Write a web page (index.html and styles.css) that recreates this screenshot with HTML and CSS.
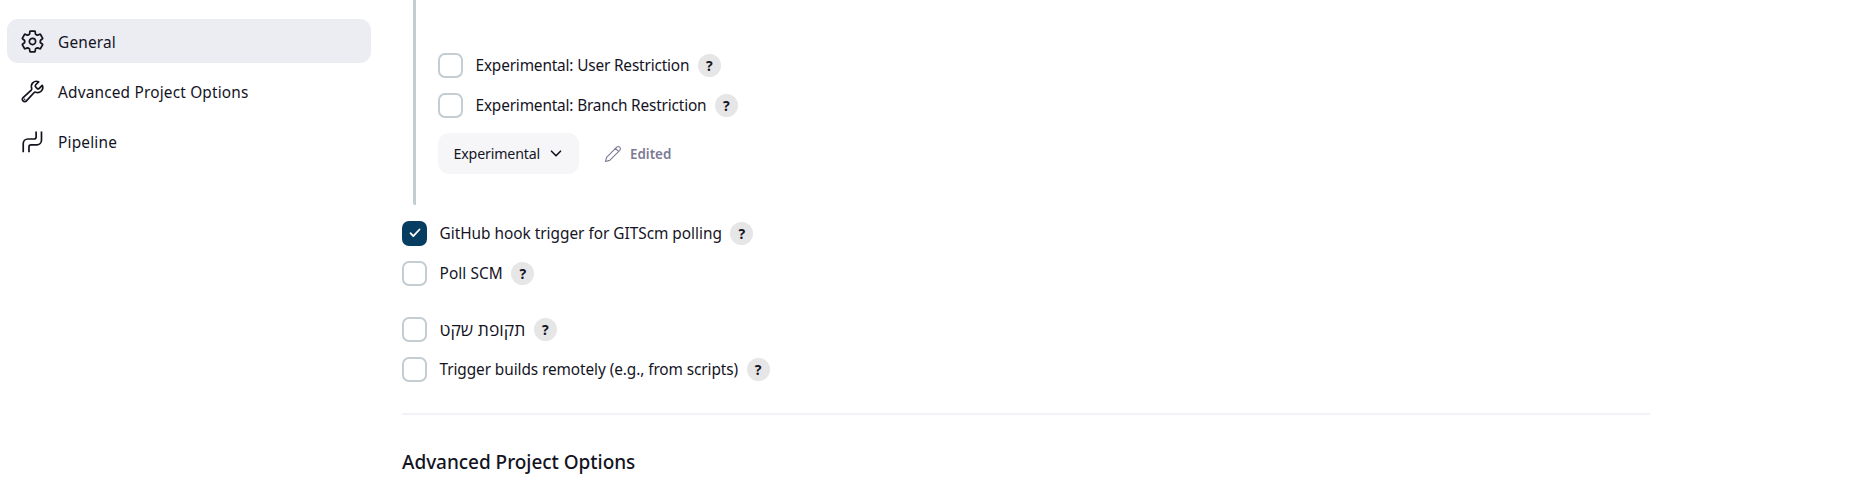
FILE: index.html
```html
<!DOCTYPE html>
<html lang="en">
<head>
<meta charset="utf-8">
<title>Advanced Project Options</title>
<link rel="stylesheet" href="styles.css">
</head>
<body>
<div class="page">
  <nav class="sidebar">
    <a class="task task--active">
      <svg class="task-icon" viewBox="0 0 512 512"><path d="M262.29 192.31a64 64 0 1057.4 57.4 64.13 64.13 0 00-57.4-57.4zM416.39 256a154.34 154.34 0 01-1.53 20.79l45.21 35.46a10.81 10.81 0 012.45 13.75l-42.77 74a10.81 10.81 0 01-13.14 4.59l-44.9-18.08a16.11 16.11 0 00-15.17 1.75A164.48 164.48 0 01325 400.8a15.94 15.94 0 00-8.82 12.14l-6.73 47.89a11.08 11.08 0 01-10.68 9.17h-85.54a11.11 11.11 0 01-10.69-8.87l-6.72-47.82a16.07 16.07 0 00-9-12.22 155.3 155.3 0 01-21.46-12.57 16 16 0 00-15.11-1.71l-44.89 18.07a10.81 10.81 0 01-13.14-4.58l-42.77-74a10.8 10.8 0 012.45-13.75l38.21-30a16.05 16.05 0 006-14.08c-.36-4.17-.58-8.33-.58-12.5s.21-8.27.58-12.35a16 16 0 00-6.07-13.94l-38.19-30A10.81 10.81 0 0149.48 186l42.77-74a10.81 10.81 0 0113.14-4.59l44.9 18.08a16.11 16.11 0 0015.17-1.75A164.48 164.48 0 01187 111.2a15.94 15.94 0 008.82-12.14l6.73-47.89A11.08 11.08 0 01213.23 42h85.54a11.11 11.11 0 0110.69 8.87l6.72 47.82a16.07 16.07 0 009 12.22 155.3 155.3 0 0121.46 12.57 16 16 0 0015.11 1.71l44.89-18.07a10.81 10.81 0 0113.14 4.58l42.77 74a10.8 10.8 0 01-2.45 13.75l-38.21 30a16.05 16.05 0 00-6.05 14.08c.33 4.14.55 8.3.55 12.47z"/></svg>
      <span class="task-text">General</span>
    </a>
    <a class="task">
      <svg class="task-icon" viewBox="0 0 512 512"><path d="M393.87 190a32.1 32.1 0 01-45.25 0l-26.57-26.57a32.09 32.09 0 010-45.26L382.19 58a1 1 0 00-.3-1.64c-38.82-16.64-89.15-8.16-121.11 23.57-30.58 30.35-32.32 76-21.12 115.84a31.93 31.93 0 01-9.06 32.08L64 380a48.17 48.17 0 1068 68l153.86-167a31.93 31.93 0 0131.6-9.13c39.54 10.59 84.54 8.6 114.72-21.19 32.49-32 39.5-88.56 23.75-120.93a1 1 0 00-1.6-.26z"/><circle class="dot" cx="96" cy="416" r="16"/></svg>
      <span class="task-text">Advanced Project Options</span>
    </a>
    <a class="task">
      <svg class="task-icon task-icon--pipe" viewBox="0 0 512 512"><path d="M66 478V300A95 95 0 0 1 161 205H290A40 40 0 0 0 330 165V50M184 478V365A40 40 0 0 1 224 325H345A95 95 0 0 0 440 230V50"/></svg>
      <span class="task-text">Pipeline</span>
    </a>
  </nav>

  <main class="config">
    <section class="nested">
      <div class="option"><span class="box"></span><span class="label label--user">Experimental: User Restriction</span><span class="help">?</span></div>
      <div class="option"><span class="box"></span><span class="label label--branch">Experimental: Branch Restriction</span><span class="help">?</span></div>
      <div class="actions">
        <button class="dropdown"><span class="dropdown-text">Experimental</span><svg class="chevron" viewBox="0 0 12 8"><path d="M1.500 1.200L6 5.800L10.500 1.200"/></svg></button>
        <span class="edited"><svg class="pencil" viewBox="0 0 18 18"><path d="M1.500 16.500L2.600 12.300L12.700 2.200Q14.200.8 15.800 2.200Q17.200 3.800 15.800 5.300L5.700 15.400ZM11.500 3.400L14.600 6.500"/></svg><span>Edited</span></span>
      </div>
    </section>

    <div class="option"><span class="box box--checked"><svg class="check" viewBox="0 0 12 10"><path d="M1.500 5.200L4.300 8.200L10.500 1.500"/></svg></span><span class="label label--hook">GitHub hook trigger for GITScm polling</span><span class="help">?</span></div>
    <div class="option"><span class="box"></span><span class="label label--poll">Poll SCM</span><span class="help">?</span></div>
    <div class="option option--spaced"><span class="box"></span><span class="label label--quiet" lang="he">תקופת שקט</span><span class="help">?</span></div>
    <div class="option"><span class="box"></span><span class="label label--remote">Trigger builds remotely (e.g., from scripts)</span><span class="help">?</span></div>

    <h2 class="section-title">Advanced Project Options</h2>
  </main>
</div>
</body>
</html>
```
FILE: styles.css
```css
* { box-sizing: border-box; }
body {
  margin: 0;
  background: #fff;
  color: #14141f;
  font-family: "Noto Sans", "Open Sans", "DejaVu Sans", sans-serif;
  font-size: 15.4px;
}
svg { fill: none; stroke: currentColor; stroke-linecap: round; stroke-linejoin: round; flex: none; }
.page { display: flex; height: 500px; overflow: hidden; }
.sidebar { width: 402px; padding: 19px 0 0 7px; display: flex; flex-direction: column; gap: 6px; flex: none; }
.task { display: flex; align-items: center; gap: 13px; width: 364px; height: 44px; padding-left: 13px; border-radius: 11px; letter-spacing: 0.18px; }
.task--active { background: #ecedf3; }
.task-icon { width: 25px; height: 25px; stroke-width: 35; }
.task-icon--pipe { stroke-linecap: butt; }
.task-text { padding-top: 2px; }
.dot { fill: currentColor; stroke: none; }
.config { width: 1248px; }
.nested { margin-left: 11px; height: 205px; padding: 45px 0 0 22px; border-left: 3px solid #c3cdd2; border-radius: 0 0 0 2px; margin-bottom: 8px; }
.option { display: flex; align-items: center; height: 40px; }
.option--spaced { margin-top: 16px; }
.box { width: 25px; height: 25px; border: 2px solid #c3cdd2; border-radius: 7px; flex: none; display: flex; align-items: center; justify-content: center; }
.box--checked { background: #083d62; border-color: #083d62; color: #fff; }
.check { width: 12px; height: 10px; stroke-width: 1.8; }
.label { margin-left: 12.5px; padding-top: 1px; white-space: nowrap; }
.label--user, .label--branch { letter-spacing: -0.17px; }
.label--hook { letter-spacing: -0.02px; }
.label--poll { letter-spacing: 0.08px; }
.label--quiet { padding-top: 0; font-size: 17.5px; line-height: 24px; }
.label--remote { letter-spacing: -0.09px; }
.help { width: 23px; height: 23px; margin-left: 8.5px; border-radius: 50%; background: #e6e6e6; display: flex; align-items: center; justify-content: center; font-size: 14px; font-weight: 700; flex: none; }
.actions { display: flex; align-items: center; margin-top: 8px; }
.dropdown { display: flex; align-items: center; gap: 10px; width: 141px; height: 41px; padding: 0 0 0 15.5px; border: 0; border-radius: 11px; background: #f6f6f9; color: inherit; font: inherit; font-size: 14.2px; letter-spacing: -0.15px; }
.chevron { width: 12px; height: 8px; stroke-width: 1.6; }
.edited { display: flex; align-items: center; gap: 8px; margin-left: 25px; color: #7c7a94; font-size: 13.4px; font-weight: 600; }
.pencil { width: 18px; height: 18px; stroke-width: 1.1; }
.section-title { margin: 24px 0 0; padding-top: 33px; border-top: 2px solid #f2f2f9; font-size: 19px; font-weight: 500; line-height: 28px; letter-spacing: -0.04px; }
```
